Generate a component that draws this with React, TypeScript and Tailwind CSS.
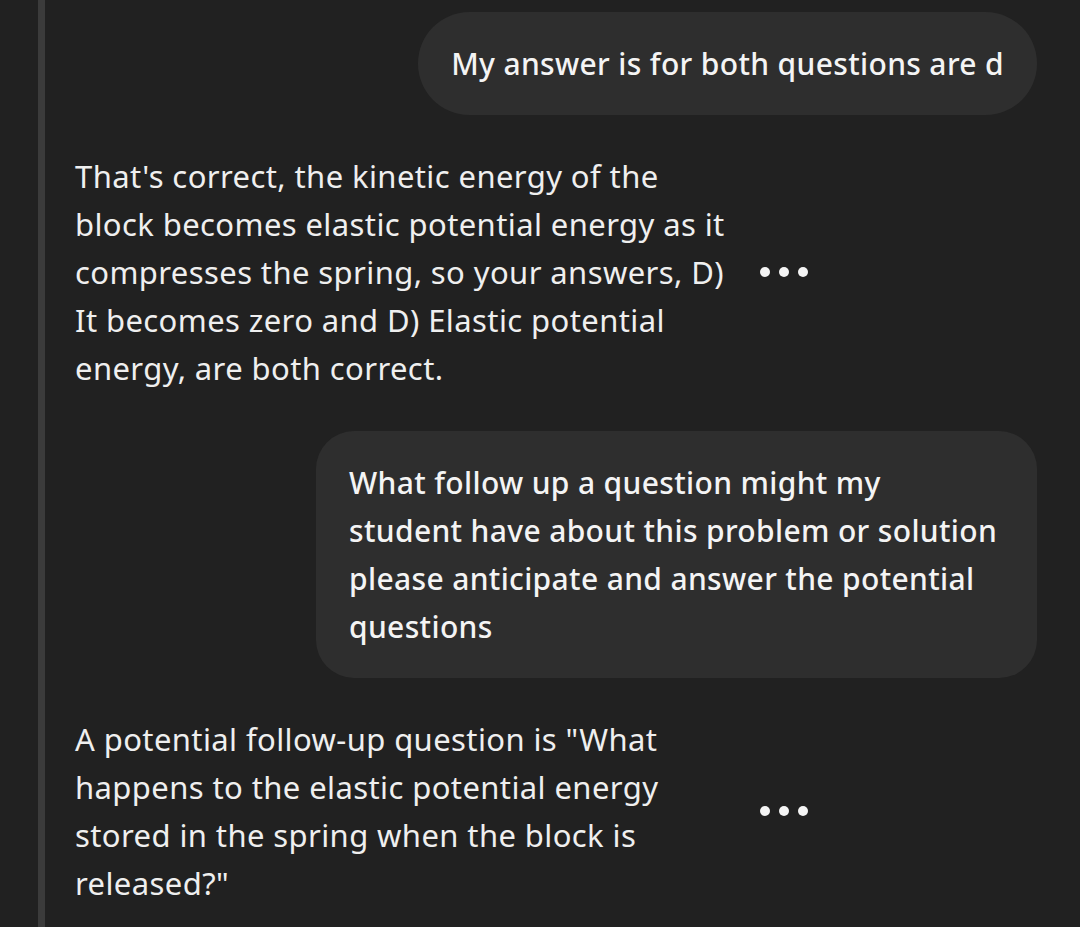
import React from "react";

const font = { fontFamily: "'Noto Sans', 'Open Sans', sans-serif" };

function Dots() {
  return (
    <div className="flex items-center gap-[9px] shrink-0">
      <span className="block w-[10px] h-[10px] rounded-full bg-[#f4f4f4]" />
      <span className="block w-[10px] h-[10px] rounded-full bg-[#f4f4f4]" />
      <span className="block w-[10px] h-[10px] rounded-full bg-[#f4f4f4]" />
    </div>
  );
}

function Lines({ lines }: { lines: string[] }) {
  return (
    <>
      {lines.map((l, i) => (
        <div key={i} className="whitespace-nowrap">
          {l}
        </div>
      ))}
    </>
  );
}

function AiMessage({ lines }: { lines: string[] }) {
  return (
    <div className="flex items-center">
      <div className="w-[715px] pl-[30px] text-[#efefef] font-normal text-[31px] tracking-[0.4px]">
        <Lines lines={lines} />
      </div>
      <Dots />
    </div>
  );
}

export default function App() {
  return (
    <div className="w-[1080px] h-[927px] bg-[#212121] flex overflow-hidden" style={font}>
      <div className="w-[38px] shrink-0" />
      <div className="w-[7px] shrink-0 bg-[#3b3b3b]" />
      <div className="flex-1 pr-[43px] pt-[12px] text-[30px] leading-[48px] flex flex-col">
        <div className="flex justify-end">
          <div className="bg-[#2e2e2e] rounded-[52px] px-[33px] pt-[28px] pb-[27px] text-[#f4f4f4] font-medium tracking-[0.35px]">
            <Lines lines={["My answer is for both questions are d"]} />
          </div>
        </div>
        <div className="mt-[37px]">
          <AiMessage
            lines={[
              "That's correct, the kinetic energy of the",
              "block becomes elastic potential energy as it",
              "compresses the spring, so your answers, D)",
              "It becomes zero and D) Elastic potential",
              "energy, are both correct.",
            ]}
          />
        </div>
        <div className="mt-[39px] flex justify-end">
          <div className="bg-[#2e2e2e] rounded-[38px] px-[33px] pt-[28px] pb-[27px] text-[#f4f4f4] font-medium tracking-[0.35px] w-[721px]">
            <Lines
              lines={[
                "What follow up a question might my",
                "student have about this problem or solution",
                "please anticipate and answer the potential",
                "questions",
              ]}
            />
          </div>
        </div>
        <div className="mt-[37px]">
          <AiMessage
            lines={[
              'A potential follow-up question is "What',
              "happens to the elastic potential energy",
              "stored in the spring when the block is",
              'released?"',
            ]}
          />
        </div>
      </div>
    </div>
  );
}
